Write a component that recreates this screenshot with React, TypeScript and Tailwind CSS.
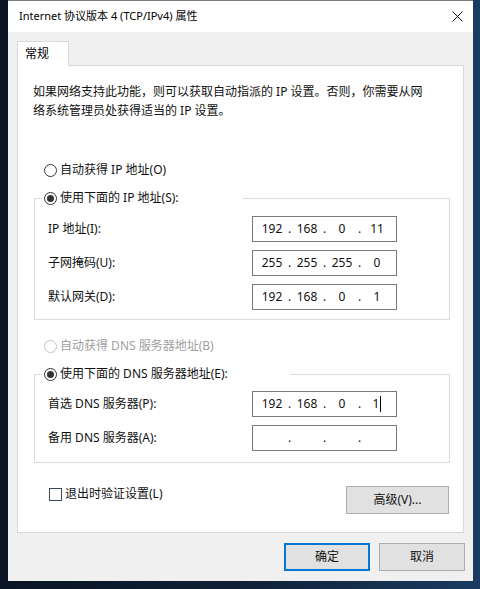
import React, { Fragment } from "react";

const font = "font-['Noto_Sans','Noto_Sans_CJK_SC',sans-serif]";

const Radio: React.FC<{ checked?: boolean; disabled?: boolean }> = ({ checked, disabled }) => (
  <span
    className={`w-[13px] h-[13px] rounded-full border bg-white flex items-center justify-center shrink-0 ${
      disabled ? "border-[#c4c4c4]" : "border-[#333333]"
    }`}
  >
    {checked && <span className="w-[7px] h-[7px] rounded-full bg-[#333333]" />}
  </span>
);

const IpBox: React.FC<{ parts: string[]; cursor?: boolean }> = ({ parts, cursor }) => (
  <div className="w-[145px] h-[26px] border border-[#7a7a7a] bg-white flex items-center pl-[5px] text-[12px] text-[#111]">
    {parts.map((p, i) => (
      <Fragment key={i}>
        <span className="w-[28px] text-center flex items-center justify-center">
          {p}
          {cursor && i === 3 && <span className="inline-block w-px h-[16px] bg-black ml-[1px]" />}
        </span>
        {i < 3 && <span className="w-[7px] text-center">.</span>}
      </Fragment>
    ))}
  </div>
);

const Row: React.FC<{ label: string; parts: string[]; cursor?: boolean }> = ({ label, parts, cursor }) => (
  <div className="flex items-center h-[26px]">
    <span className="w-[204px] text-[12px] text-[#111]">{label}</span>
    <IpBox parts={parts} cursor={cursor} />
  </div>
);

const App: React.FC = () => {
  return (
    <div className={`w-[480px] h-[589px] bg-gradient-to-r from-[#0a1424] via-[#0f2036] to-[#1a3c62] ${font}`}>
      <div className="ml-[8px] w-[465px] h-[581px] bg-[#f0f0f0] flex flex-col">
        {/* title bar */}
        <div className="h-[32px] bg-white border-t border-[#7f7f7f] flex items-center justify-between pl-[11px] pr-[10px]">
          <span className="text-[11px] text-black">Internet 协议版本 4 (TCP/IPv4) 属性</span>
          <svg width="11" height="11" viewBox="0 0 11 11">
            <path d="M0.5 0.5 L10.5 10.5 M10.5 0.5 L0.5 10.5" stroke="#111" strokeWidth="1" />
          </svg>
        </div>

        {/* tabs */}
        <div className="pt-[9px] pl-[9px]">
          <div className="relative z-10 w-[52px] h-[25px] -mb-px bg-white border-t border-l border-r border-[#d9d9d9] flex items-center pl-[7px] text-[12px] text-black">
            常规
          </div>
          <div className="w-[447px] h-[468px] bg-white border border-[#d9d9d9] flex flex-col text-[12px] text-[#111]">
            <p className="pt-[16px] pl-[15px] leading-[19px]">
              如果网络支持此功能，则可以获取自动指派的 IP 设置。否则，你需要从网
              <br />
              络系统管理员处获得适当的 IP 设置。
            </p>

            <div className="mt-[40px] ml-[26px] h-[20px] flex items-center gap-[3px]">
              <Radio />
              <span>自动获得 IP 地址(O)</span>
            </div>

            <fieldset className="mt-[8px] ml-[16px] w-[416px] border border-[#dcdcdc]">
              <legend className="ml-[7px] w-[201px] h-[20px]">
                <div className="h-[20px] flex items-center gap-[3px] pl-[2px]">
                  <Radio checked />
                  <span>使用下面的 IP 地址(S):</span>
                </div>
              </legend>
              <div className="pl-[13px] pt-[8px] pb-[9px] flex flex-col gap-[8px]">
                <Row label="IP 地址(I):" parts={["192", "168", "0", "11"]} />
                <Row label="子网掩码(U):" parts={["255", "255", "255", "0"]} />
                <Row label="默认网关(D):" parts={["192", "168", "0", "1"]} />
              </div>
            </fieldset>

            <div className="mt-[16px] ml-[26px] h-[20px] flex items-center gap-[3px] text-[#a0a0a0]">
              <Radio disabled />
              <span>自动获得 DNS 服务器地址(B)</span>
            </div>

            <fieldset className="mt-[8px] ml-[16px] w-[416px] border border-[#dcdcdc]">
              <legend className="ml-[7px] w-[248px] h-[20px]">
                <div className="h-[20px] flex items-center gap-[3px] pl-[2px]">
                  <Radio checked />
                  <span>使用下面的 DNS 服务器地址(E):</span>
                </div>
              </legend>
              <div className="pl-[13px] pt-[7px] pb-[11px] flex flex-col gap-[8px]">
                <Row label="首选 DNS 服务器(P):" parts={["192", "168", "0", "1"]} cursor />
                <Row label="备用 DNS 服务器(A):" parts={["", "", "", ""]} />
              </div>
            </fieldset>

            <div className="mt-[23px] ml-[31px] w-[400px] flex items-start justify-between">
              <div className="mt-[1px] flex items-center gap-[3px] h-[14px]">
                <span className="w-[13px] h-[13px] border border-[#3a4a5a] bg-white" />
                <span>退出时验证设置(L)</span>
              </div>
              <button className="w-[103px] h-[28px] bg-[#e1e1e1] border border-[#adadad] text-[12px] text-[#111]">
                高级(V)...
              </button>
            </div>
          </div>
        </div>

        {/* dialog buttons */}
        <div className="mt-[10px] pr-[8px] flex justify-end gap-[9px]">
          <button className="w-[86px] h-[28px] bg-[#e1e1e1] border-2 border-[#0078d7] text-[12px] text-[#111]">
            确定
          </button>
          <button className="w-[86px] h-[28px] bg-[#e1e1e1] border border-[#adadad] text-[12px] text-[#111]">
            取消
          </button>
        </div>
      </div>
    </div>
  );
};

export default App;
